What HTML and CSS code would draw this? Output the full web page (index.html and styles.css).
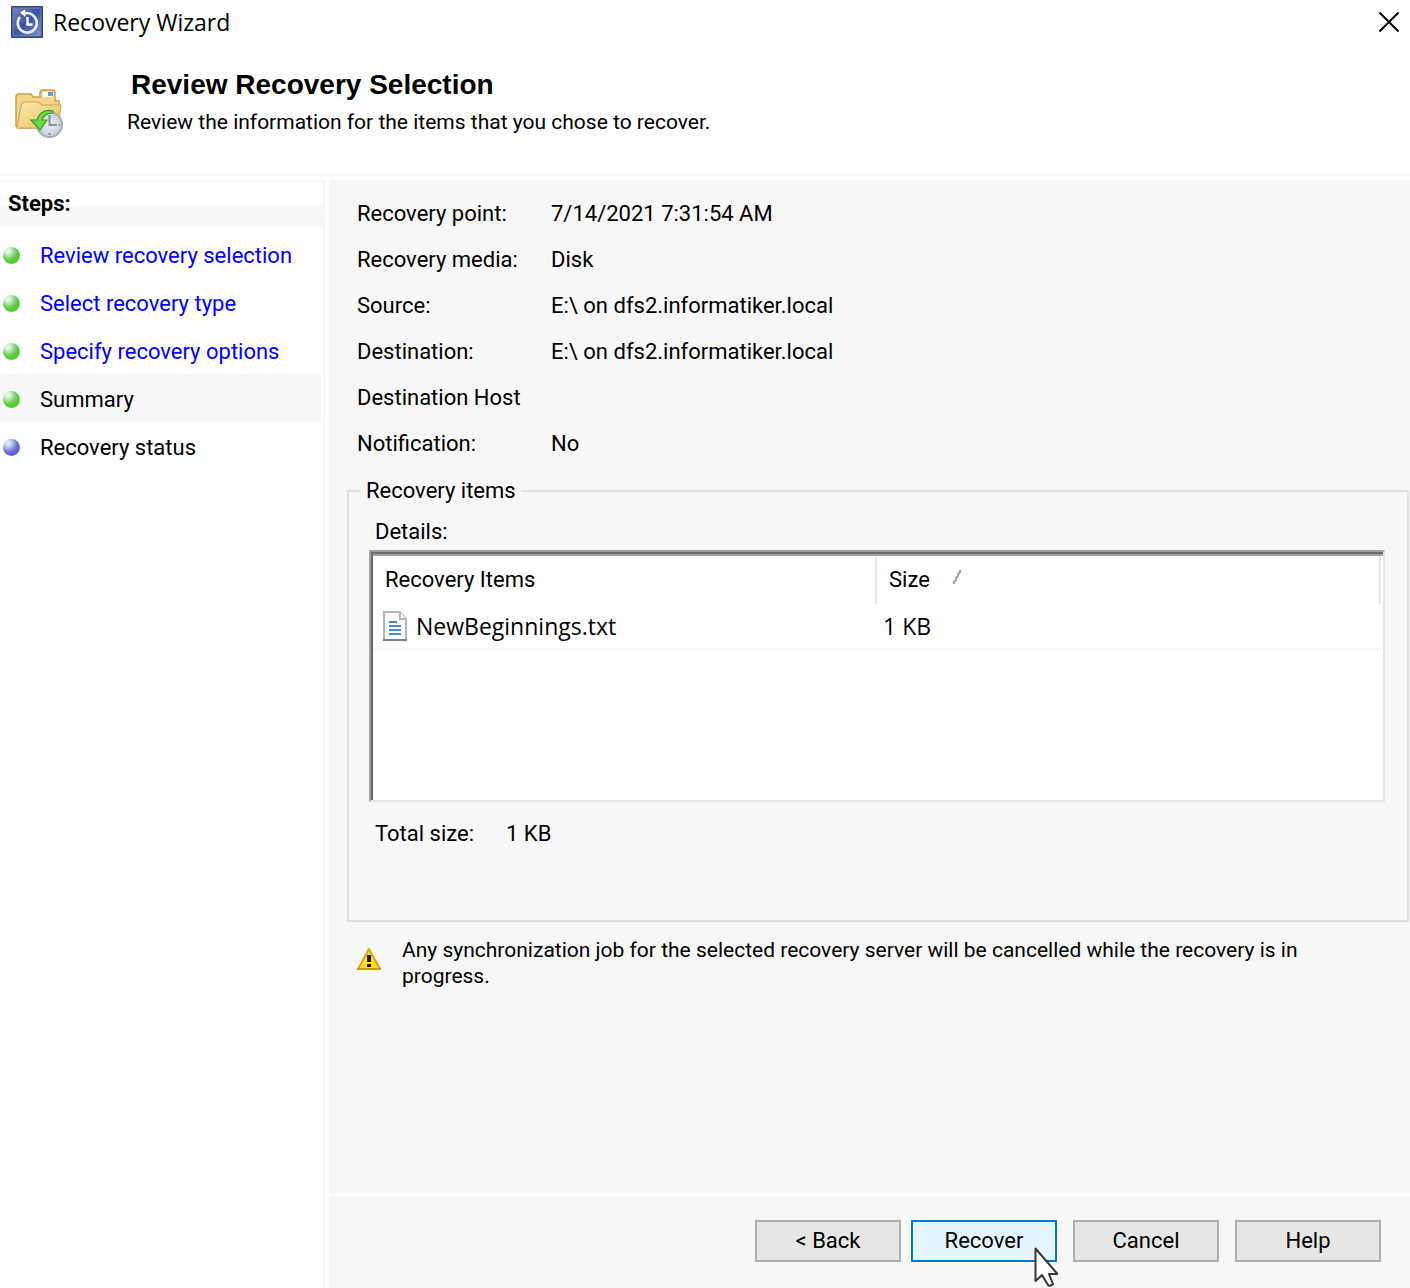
FILE: index.html
```html
<!DOCTYPE html>
<html lang="en">
<head>
    <meta charset="UTF-8">
    <meta name="viewport" content="width=device-width, initial-scale=1.0">
    <title>Recovery Wizard</title>
    <link rel="stylesheet" href="styles.css">
</head>
<body>
    <div class="window">
        <div class="title-bar">
            <svg class="app-icon" viewBox="0 0 32 32" aria-hidden="true">
                <defs>
                    <linearGradient id="appBlue" x1="0" y1="0" x2="1" y2="1">
                        <stop offset="0" stop-color="#7586bb"/>
                        <stop offset="0.5" stop-color="#3d549b"/>
                        <stop offset="1" stop-color="#7f96cc"/>
                    </linearGradient>
                </defs>
                <rect width="32" height="32" rx="1" fill="#2d4285"/>
                <rect x="2" y="2" width="28" height="28" fill="url(#appBlue)" stroke="#7183b8"/>
                <path d="M22 9.500A9.500 9.500 0 1 1 9 11" fill="none" stroke="#e9eef8" stroke-width="2.600"/>
                <path d="M9 6.500L14 3.500L14.500 11Z" fill="#fff"/>
                <path d="M13 7.500Q18 6 22.500 9.500" fill="none" stroke="#e9eef8" stroke-width="2.400"/>
                <path d="M16.500 11V18.500H21.500" fill="none" stroke="#fff" stroke-width="2.400"/>
            </svg>
            <span class="title">Recovery Wizard</span>
            <button type="button" class="close-btn" aria-label="Close">
                <svg viewBox="0 0 20 20" aria-hidden="true"><path d="M0.500 0.500L19.500 19.500M19.500 0.500L0.500 19.500" stroke="#000" stroke-width="2"/></svg>
            </button>
        </div>

        <header class="page-header">
            <svg class="folder-icon" viewBox="0 0 50 50" aria-hidden="true">
                <defs>
                    <linearGradient id="folderFront" x1="0" y1="0" x2="1" y2="1">
                        <stop offset="0" stop-color="#ffe9ad"/>
                        <stop offset="1" stop-color="#e5bd62"/>
                    </linearGradient>
                    <radialGradient id="clockFace">
                        <stop offset="0" stop-color="#f1f4f8"/>
                        <stop offset="1" stop-color="#c2cbd5"/>
                    </radialGradient>
                </defs>
                <path d="M2 37V8Q2 5 5 5H17L19 8H26V4Q26 1 29 1H38Q41 1 41 4V12H45V39H5Z" fill="#f3d58c" stroke="#caa04b" stroke-width="1.500"/>
                <rect x="29" y="3" width="9" height="5" fill="#fff"/>
                <rect x="34" y="3" width="5" height="4" fill="#5c9be8"/>
                <path d="M3 39L7 17Q8 13 11 13H24L29 16H47L44 39Z" fill="url(#folderFront)" stroke="#d2a653" stroke-width="1.200"/>
                <circle cx="35.500" cy="35.500" r="12.500" fill="url(#clockFace)" stroke="#a5aeb7" stroke-width="2"/>
                <path d="M35.500 26V36H43" fill="none" stroke="#848e99" stroke-width="2"/>
                <path d="M35.500 44V46M28 36H26M45 36H46" stroke="#7f8994" stroke-width="2"/>
                <path d="M39 22Q27 19 23 31H17L26 41L33 31H28Q30 24 39 24Z" fill="#6fd943" stroke="#379b27" stroke-width="1.200"/>
            </svg>
            <div class="header-text">
                <h1>Review Recovery Selection</h1>
                <p>Review the information for the items that you chose to recover.</p>
            </div>
        </header>

        <div class="main">
            <nav class="steps">
                <h2>Steps:</h2>
                <ul>
                    <li><span class="dot"></span><a href="#">Review recovery selection</a></li>
                    <li><span class="dot"></span><a href="#">Select recovery type</a></li>
                    <li><span class="dot"></span><a href="#">Specify recovery options</a></li>
                    <li class="current"><span class="dot"></span>Summary</li>
                    <li><span class="dot pending"></span>Recovery status</li>
                </ul>
            </nav>

            <main class="panel">
                <div class="content">
                    <dl class="summary">
                        <dt>Recovery point:</dt><dd>7/14/2021 7:31:54 AM</dd>
                        <dt>Recovery media:</dt><dd>Disk</dd>
                        <dt>Source:</dt><dd>E:\ on dfs2.informatiker.local</dd>
                        <dt>Destination:</dt><dd>E:\ on dfs2.informatiker.local</dd>
                        <dt>Destination Host</dt><dd></dd>
                        <dt>Notification:</dt><dd>No</dd>
                    </dl>

                    <fieldset class="items">
                        <legend>Recovery items</legend>
                        <div class="details-label" id="detailsLabel">Details:</div>
                        <div class="list-box">
                            <table aria-labelledby="detailsLabel">
                                <thead>
                                    <tr>
                                        <th class="name-col">Recovery Items</th>
                                        <th class="size-col">Size<svg class="sort-mark" viewBox="0 0 8 14" aria-hidden="true"><path d="M1 14V12L3 10V8L5 6V4L7 2V0" fill="none" stroke="#a0a0a0" stroke-width="2"/></svg></th>
                                    </tr>
                                </thead>
                                <tbody>
                                    <tr>
                                        <td>
                                            <div class="file">
                                                <svg class="file-icon" viewBox="0 0 24 30" aria-hidden="true">
                                                    <path d="M1 1H17L23 8V29H1Z" fill="#fafafa" stroke="#b5b5b5" stroke-width="2"/>
                                                    <path d="M17 1V8H23" fill="#fff" stroke="#b5b5b5" stroke-width="2"/>
                                                    <path d="M0 29H24" stroke="#808080" stroke-width="2"/>
                                                    <path d="M6 11H14M6 15H18M6 19H18M6 23H18" stroke="#4a8ac8" stroke-width="2"/>
                                                </svg>
                                                NewBeginnings.txt
                                            </div>
                                        </td>
                                        <td>1 KB</td>
                                    </tr>
                                </tbody>
                            </table>
                        </div>
                        <div class="total"><span>Total size:</span><span>1 KB</span></div>
                    </fieldset>

                    <div class="warning">
                        <svg class="warning-icon" viewBox="0 0 24 22" aria-hidden="true">
                            <path d="M12 1L23 21H1Z" fill="#ffdf20" stroke="#d3a91a" stroke-width="2" stroke-linejoin="round"/>
                            <path d="M0 21H24" stroke="#c59a12" stroke-width="2"/>
                            <path d="M12 7V14M12 16V19" stroke="#1c1a08" stroke-width="4"/>
                        </svg>
                        <p>Any synchronization job for the selected recovery server will be cancelled while the recovery is in progress.</p>
                    </div>
                </div>

                <div class="actions">
                    <button type="button" class="btn">&lt; Back</button>
                    <div class="primary-action">
                        <button type="button" class="btn btn-primary">Recover</button>
                        <svg class="cursor" viewBox="0 0 24 40" aria-hidden="true">
                            <path d="M1.500 1.500V34L8 28L14 38Q16 40 19 37L15 27H23.500Z" fill="#fff" stroke="#34343c" stroke-width="2" stroke-linejoin="round"/>
                        </svg>
                    </div>
                    <button type="button" class="btn">Cancel</button>
                    <button type="button" class="btn">Help</button>
                </div>
            </main>
        </div>
    </div>
</body>
</html>
```

FILE: styles.css
```css
* {
    margin: 0;
    padding: 0;
    box-sizing: border-box;
}

body {
    font-family: Roboto, "Liberation Sans", sans-serif;
    font-size: 22px;
    line-height: 26px;
    color: #000;
    background: #fff;
}

.window {
    min-height: 100vh;
    display: flex;
    flex-direction: column;
}

.title-bar {
    display: flex;
    align-items: center;
    height: 44px;
    padding: 0 11px;
    font-family: "Open Sans", "Noto Sans", sans-serif;
    font-size: 23px;
}

.app-icon {
    width: 32px;
    height: 32px;
    margin-right: 10px;
}

.title {
    flex: 1;
}

.close-btn {
    width: 20px;
    height: 20px;
    border: none;
    background: none;
}

.close-btn svg {
    display: block;
}

.page-header {
    display: flex;
    height: 132px;
    padding: 28px 14px 0;
    border-bottom: 2px solid #f7f7f7;
}

.folder-icon {
    width: 50px;
    height: 50px;
    margin-top: 17px;
}

.header-text {
    padding-left: 63px;
}

.header-text p {
    font-size: 21px;
}

h1 {
    font-family: "Liberation Sans", sans-serif;
    font-size: 28px;
    line-height: 26px;
    margin-bottom: 11px;
    padding-left: 4px;
}

.main {
    flex: 1;
    display: flex;
    gap: 4px;
    padding-top: 4px;
}

.steps {
    flex: 0 0 325px;
    border-top: 2px solid #f7f7f7;
    border-right: 2px solid #f7f7f7;
}

.steps h2 {
    font-size: 22px;
    line-height: 44px;
    padding-left: 8px;
    background: linear-gradient(#fff 24px, #f5faf6 24px, #f5faf6 34px, #f7f7f7 34px);
}

.steps ul {
    list-style: none;
    padding: 4px 2px 0 0;
}

.steps li {
    display: flex;
    align-items: center;
    height: 48px;
    padding: 3px 0 0 3px;
}

.steps a {
    color: #00f;
    text-decoration: none;
}

.steps .current {
    background: #f7f7f7;
}

.dot {
    width: 17px;
    height: 17px;
    margin-right: 20px;
    border-radius: 50%;
    background: radial-gradient(circle at 30% 25%, #e4f7e4 10%, #8fd68c 35%, #58cf32 55%, #55c62c 80%, #8dbb80);
}

.dot.pending {
    background: radial-gradient(circle at 30% 25%, #d5e8ff 10%, #93a6e0 35%, #6266cf 55%, #6266cf 80%, #9193bd);
}

.panel {
    flex: 1;
    display: flex;
    flex-direction: column;
    background: #f7f7f7;
}

.content {
    flex: 1;
    padding: 11px 1px 0 18px;
}

.summary {
    display: grid;
    grid-template-columns: 194px 1fr;
    grid-auto-rows: 46px;
    line-height: 46px;
    padding-left: 10px;
}

.items {
    margin-top: 12px;
    padding: 16px 22px 73px 20px;
    border: 2px solid #dde1df;
}

.items legend {
    line-height: 24px;
    margin-left: -8px;
    padding: 0 5px;
}

.details-label {
    padding-left: 6px;
    margin-bottom: 5px;
}

/* sunken edge: light, dark, light on top and light, dark on the left */
.list-box {
    height: 252px;
    padding: 4px 2px 0 2px;
    background: #fff;
    border: 2px solid #e5e5e5;
    border-top-color: #a0a0a0;
    border-left-color: #a0a0a0;
    box-shadow: inset 2px 0 #696969, inset 0 2px #696969, inset 0 4px #a0a0a0;
}

table {
    width: 100%;
    border-spacing: 0;
    table-layout: fixed;
}

th {
    height: 48px;
    padding-left: 12px;
    font-weight: normal;
    text-align: left;
    border-right: 2px solid #e5e8e7;
}

.name-col {
    width: 50%;
}

.sort-mark {
    width: 8px;
    height: 14px;
    margin-left: 23px;
    vertical-align: 3px;
}

td {
    height: 46px;
    padding-left: 6px;
    font-family: "Open Sans", "Noto Sans", sans-serif;
    font-size: 23px;
    border-bottom: 2px solid #f7f7f7;
}

.file {
    display: flex;
    align-items: center;
    gap: 9px;
    padding-left: 4px;
}

.file-icon {
    width: 24px;
    height: 30px;
}

.total {
    display: flex;
    gap: 32px;
    padding: 19px 6px 0;
}

.warning {
    display: flex;
    gap: 21px;
    padding: 15px 40px 0 10px;
    font-size: 21px;
}

.warning-icon {
    flex: none;
    width: 24px;
    height: 22px;
    margin-top: 11px;
}

.actions {
    display: flex;
    justify-content: flex-end;
    gap: 16px;
    padding: 24px 29px 26px;
    border-top: 2px solid #fff;
}

.btn {
    width: 146px;
    height: 42px;
    font: inherit;
    color: #000;
    background: #e6e6e6;
    border: 2px solid #abafad;
}

.btn-primary {
    background: #e5f5ff;
    border-color: #0078d7;
}

.primary-action {
    position: relative;
    margin-left: -6px;
}

.cursor {
    position: absolute;
    left: 123px;
    top: 27px;
    width: 24px;
    height: 40px;
}
```
